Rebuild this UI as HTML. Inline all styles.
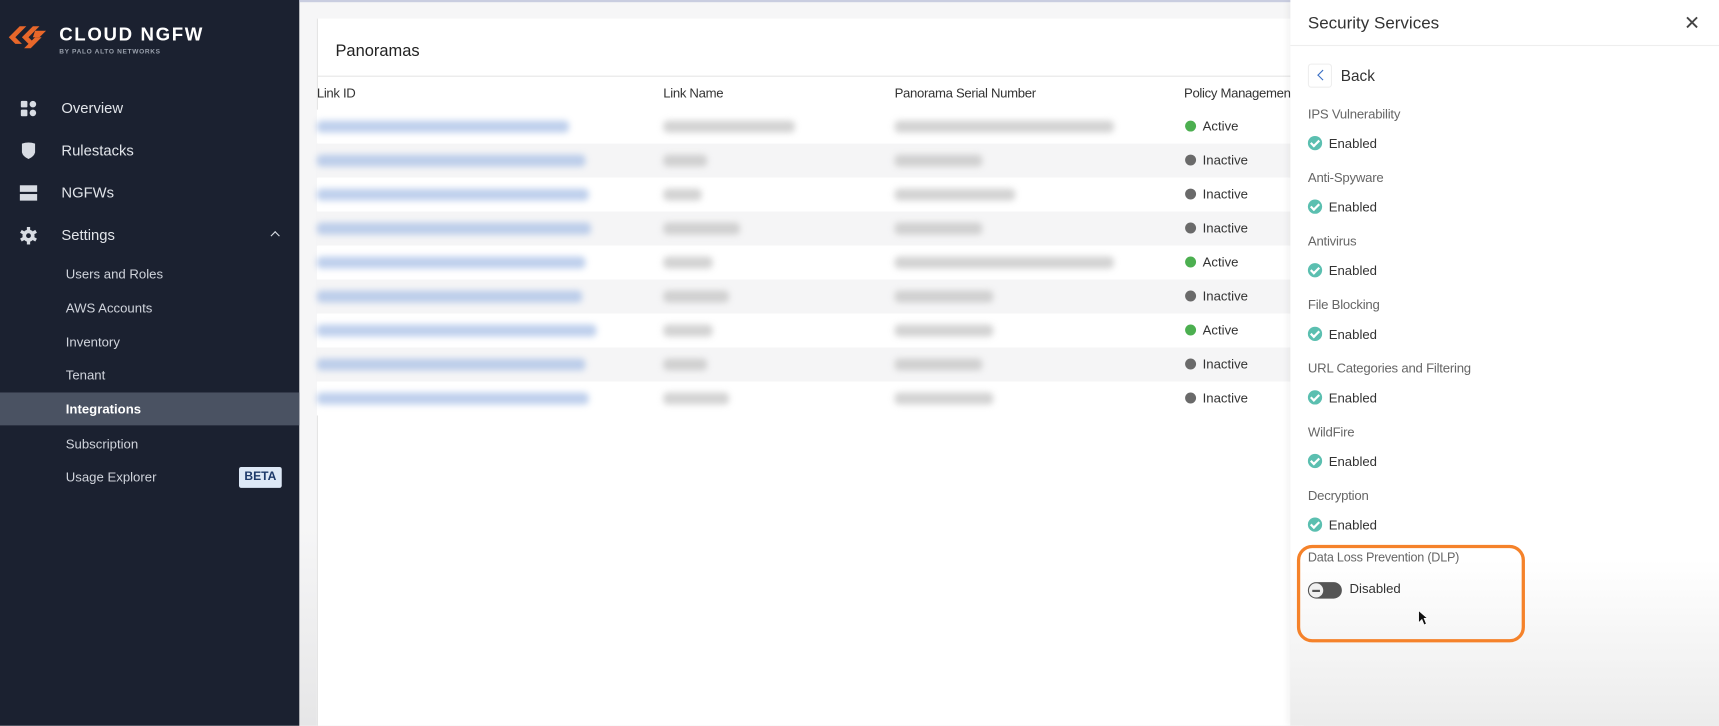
<!DOCTYPE html>
<html><head><meta charset="utf-8"><style>
*{margin:0;padding:0;box-sizing:border-box}
html,body{width:1719px;height:726px;overflow:hidden;background:#f3f4f6}
#w{position:absolute;left:0;top:0;width:1568px;height:662px;transform:scale(1.0963);transform-origin:0 0;font-family:"Liberation Sans",sans-serif;background:linear-gradient(#f6f6f7 0,#f6f6f7 480px,#e6e6e7 662px)}
.sb{position:absolute;left:0;top:0;width:273px;height:662px;background:#1b2130;color:#d8dce3}
.topline{position:absolute;left:0;top:0;width:1568px;height:2px;background:#c9cde0}
.nav{position:absolute;left:56px;font-size:13.5px;color:#e2e5ea}
.ic{position:absolute;left:18px}
.sub{position:absolute;left:60px;font-size:12px;color:#d0d4dc}
.card{position:absolute;left:289px;top:17px;width:900px;height:645px;background:#fff;border-left:1px solid #e3e3e3}
.th{position:absolute;top:78px;font-size:12px;color:#333;letter-spacing:-.3px}
.row{position:absolute;left:289px;width:890px;height:31px}
.b{position:absolute;height:11px;border-radius:4px;filter:blur(3px);opacity:.75}
.st{position:absolute;left:1081px;font-size:12px;color:#333}
.st i{display:inline-block;width:10px;height:10px;border-radius:50%;margin-right:6px;vertical-align:-1px}
.dr{position:absolute;left:1177px;top:0;width:391px;height:662px;background:linear-gradient(#fff 0,#fff 510px,#ececec 662px);box-shadow:-2px 0 6px rgba(0,0,0,.06)}
.lab{position:absolute;left:16px;font-size:12px;color:#666;letter-spacing:-.2px}
.en{position:absolute;left:16px;font-size:12px;color:#333}
.en i{display:inline-block;width:13px;height:13px;border-radius:50%;background:#5bbfb0;vertical-align:-2px;margin-right:6px;position:relative}
.en i:after{content:"";position:absolute;left:4px;top:2px;width:3px;height:6px;border:solid #fff;border-width:0 2px 2px 0;transform:rotate(45deg)}
</style></head><body><div id="w">
<div class="sb">
 <svg style="position:absolute;left:6px;top:18px" width="42" height="32" viewBox="0 0 42 32"><g fill="#e8672a"><path d="M2 16 L12 6 L18 6 L8 16 L14 22 L8 22Z"/><path d="M14 16 L24 6 L30 6 L20 16 L26 22 L20 22Z"/><path d="M16 26 L26 16 L32 16 L22 26Z"/><path d="M26 10 L36 10 L30 16 L24 16Z"/></g></svg>
 <div style="position:absolute;left:54px;top:22px;font-size:17px;font-weight:bold;color:#fff;letter-spacing:1.5px">CLOUD NGFW</div>
 <div style="position:absolute;left:54px;top:45px;font-size:6px;font-weight:bold;color:#9aa1ad;letter-spacing:.6px">BY PALO ALTO NETWORKS</div>
 <svg class="ic" style="top:91px" width="16" height="16"><rect x="1" y="1" width="6" height="6" rx="1" fill="#d8dce3"/><circle cx="12" cy="4" r="3" fill="#d8dce3"/><rect x="1" y="9" width="6" height="6" rx="1" fill="#d8dce3"/><circle cx="12" cy="12" r="3" fill="#d8dce3"/></svg>
 <div class="nav" style="top:91px">Overview</div>
 <svg class="ic" style="top:129px" width="16" height="17"><path d="M2 2 Q8 0 14 2 L14 10 Q13 14 8 16 Q3 14 2 10Z" fill="#d8dce3"/></svg>
 <div class="nav" style="top:130px">Rulestacks</div>
 <svg class="ic" style="top:168px" width="16" height="16"><rect x="0" y="1" width="16" height="6" fill="#d8dce3"/><rect x="0" y="9" width="16" height="6" fill="#d8dce3"/></svg>
 <div class="nav" style="top:168px">NGFWs</div>
 <svg class="ic" style="top:207px" width="16" height="16" viewBox="0 0 16 16"><g fill="#d8dce3"><circle cx="8" cy="8" r="5.5"/><rect x="6.5" y="0" width="3" height="16"/><rect x="6.5" y="0" width="3" height="16" transform="rotate(60 8 8)"/><rect x="6.5" y="0" width="3" height="16" transform="rotate(120 8 8)"/></g><circle cx="8" cy="8" r="2.2" fill="#1b2130"/></svg>
 <div class="nav" style="top:207px">Settings</div>
 <div style="position:absolute;left:248px;top:212px;width:6px;height:6px;border-left:1.5px solid #d8dce3;border-top:1.5px solid #d8dce3;transform:rotate(45deg)"></div>
 <div class="sub" style="top:243px">Users and Roles</div>
 <div class="sub" style="top:274px">AWS Accounts</div>
 <div class="sub" style="top:305px">Inventory</div>
 <div class="sub" style="top:335px">Tenant</div>
 <div style="position:absolute;left:0;top:358px;width:273px;height:30px;background:#4a5262"></div>
 <div class="sub" style="top:366px;font-weight:bold;color:#fff">Integrations</div>
 <div class="sub" style="top:398px">Subscription</div>
 <div class="sub" style="top:428px">Usage Explorer</div>
 <div style="position:absolute;left:218px;top:426px;width:39px;height:19px;background:#dde8f6;border-radius:2px;color:#1e3a6a;font-size:11px;font-weight:bold;text-align:center;line-height:19px">BETA</div>
</div>
<div class="topline" style="left:273px;width:1295px"></div>
<div class="card">
 <div style="position:absolute;left:16px;top:21px;font-size:15px;color:#222">Panoramas</div>
 <div style="position:absolute;left:0;top:52px;width:900px;border-top:1px solid #e5e5e5"></div>
 <div style="position:absolute;left:0;top:99px;width:900px;border-top:1px solid #e5e5e5"></div>
</div>
<div class="th" style="left:289px">Link ID</div>
<div class="th" style="left:605px">Link Name</div>
<div class="th" style="left:816px">Panorama Serial Number</div>
<div class="th" style="left:1080px">Policy Managemen</div>
<div id="rows"></div>
<div class="dr">
 <div style="position:absolute;left:16px;top:13px;font-size:15.5px;color:#333">Security Services</div>
 <div style="position:absolute;left:359px;top:11px;font-size:18px;color:#444">✕</div>
 <div style="position:absolute;left:0;top:41px;width:391px;border-top:1px solid #eee"></div>
 <div style="position:absolute;left:16px;top:58px;width:22px;height:22px;border:1px solid #eee;border-radius:3px"></div>
 <div style="position:absolute;left:26px;top:65px;width:7px;height:7px;border-left:1.5px solid #3a6fc4;border-bottom:1.5px solid #3a6fc4;transform:rotate(45deg)"></div>
 <div style="position:absolute;left:46px;top:61px;font-size:14px;color:#333">Back</div>
 <div class="lab" style="top:97px">IPS Vulnerability</div><div class="en" style="top:124px"><i></i>Enabled</div>
 <div class="lab" style="top:155px">Anti-Spyware</div><div class="en" style="top:182px"><i></i>Enabled</div>
 <div class="lab" style="top:213px">Antivirus</div><div class="en" style="top:240px"><i></i>Enabled</div>
 <div class="lab" style="top:271px">File Blocking</div><div class="en" style="top:298px"><i></i>Enabled</div>
 <div class="lab" style="top:329px">URL Categories and Filtering</div><div class="en" style="top:356px"><i></i>Enabled</div>
 <div class="lab" style="top:387px">WildFire</div><div class="en" style="top:414px"><i></i>Enabled</div>
 <div class="lab" style="top:445px">Decryption</div><div class="en" style="top:472px"><i></i>Enabled</div>
 <div style="position:absolute;left:6px;top:497px;width:208px;height:89px;border:3px solid #f5822a;border-radius:14px"></div>
 <div class="lab" style="top:503px;font-size:11.5px">Data Loss Prevention (DLP)</div>
 <div style="position:absolute;left:16px;top:531px;width:31px;height:15px;border-radius:8px;background:#555"></div>
 <div style="position:absolute;left:17px;top:532px;width:13px;height:13px;border-radius:50%;background:#f0f0f0"></div>
 <div style="position:absolute;left:20px;top:538px;width:7px;height:1.5px;background:#555"></div>
 <div style="position:absolute;left:54px;top:530px;font-size:12px;color:#333">Disabled</div>
 <svg style="position:absolute;left:116px;top:556px" width="10" height="16"><path d="M1 1 L1 12 L4 9 L6 14 L8 13 L6 8 L9 8Z" fill="#111" stroke="#fff" stroke-width=".6"/></svg>
</div>
<script>
var st=["Active","Inactive","Inactive","Inactive","Active","Inactive","Active","Inactive","Inactive"];
var w1=[230,245,248,250,245,242,255,245,248],w2=[120,40,35,70,45,60,45,40,60],w3=[200,80,110,80,200,90,90,80,90];
var h="";
for(var i=0;i<9;i++){var y=100+i*31;
h+='<div class="row" style="top:'+y+'px;background:'+(i%2?'#f5f5f6':'#fff')+'"></div>';
h+='<div class="b" style="left:289px;top:'+(y+10)+'px;width:'+w1[i]+'px;background:#a9c0e6"></div>';
h+='<div class="b" style="left:605px;top:'+(y+10)+'px;width:'+w2[i]+'px;background:#c4c4c4"></div>';
h+='<div class="b" style="left:816px;top:'+(y+10)+'px;width:'+w3[i]+'px;background:#c4c4c4"></div>';
h+='<div class="st" style="top:'+(y+8)+'px"><i style="background:'+(st[i]=="Active"?'#4caf50':'#6a6a6a')+'"></i>'+st[i]+'</div>';}
document.getElementById("rows").innerHTML=h;
</script>
</div></body></html>
